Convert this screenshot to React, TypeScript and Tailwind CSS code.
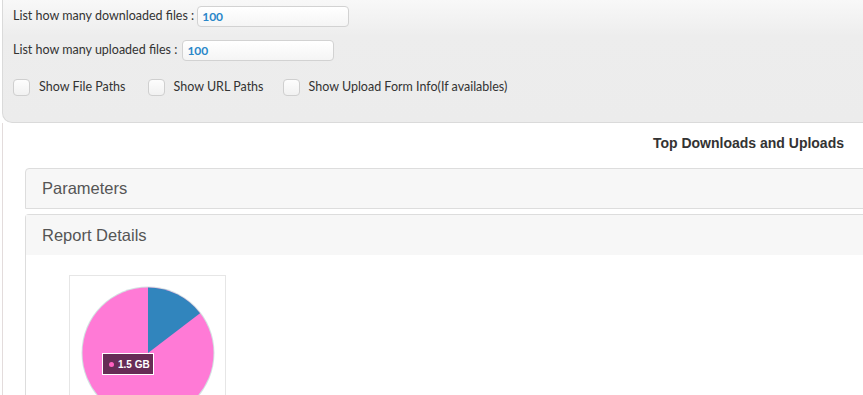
import React from "react";

function Check({ label }: { label: string }) {
  return (
    <div className="flex items-center">
      <div className="w-[17px] h-[17px] rounded-[4px] border border-[#cfcfcf] bg-gradient-to-b from-[#fdfdfd] to-[#f1f1f1]" />
      <span className="ml-[9px] text-[12.5px] text-[#333]">{label}</span>
    </div>
  );
}

function Pie() {
  const cx = 78, cy = 77, r = 65.5;
  const a = (52.6 * Math.PI) / 180;
  const ex = cx + r * Math.sin(a);
  const ey = cy - r * Math.cos(a);
  return (
    <svg width="156" height="150" viewBox="0 0 156 150">
      <circle cx={cx} cy={cy} r={r + 1} fill="#d3e2e2" />
      <circle cx={cx} cy={cy} r={r} fill="#ff7ad6" />
      <path d={`M${cx} ${cy} L${cx} ${cy - r} A${r} ${r} 0 0 1 ${ex} ${ey} Z`} fill="#3185bd" />
    </svg>
  );
}

export default function App() {
  return (
    <div className="w-[863px] h-[395px] overflow-hidden bg-white" style={{ fontFamily: "Lato, 'Open Sans', sans-serif" }}>
      <div className="ml-[2px] h-[123px] border-l border-b border-[#dadada] rounded-bl-[10px] bg-gradient-to-b from-[#f8f8f8] via-[#ededed] via-30% to-[#ececec] pl-[10px] pt-[6px]">
        <div className="flex items-center h-[21px]">
          <span className="text-[12.5px] text-[#333]">List how many downloaded files :</span>
          <div className="ml-[3px] w-[152px] h-[21px] rounded-[4px] border border-[#d2d2d2] bg-gradient-to-b from-[#ffffff] to-[#f5f5f5] pl-[4px] flex items-center">
            <span className="text-[12px] font-bold text-[#2a87c9]">100</span>
          </div>
        </div>
        <div className="flex items-center h-[21px] mt-[13px]">
          <span className="text-[12.5px] text-[#333]">List how many uploaded files :</span>
          <div className="ml-[5px] w-[152px] h-[21px] rounded-[4px] border border-[#d2d2d2] bg-gradient-to-b from-[#ffffff] to-[#f5f5f5] pl-[4px] flex items-center">
            <span className="text-[12px] font-bold text-[#2a87c9]">100</span>
          </div>
        </div>
        <div className="flex items-center mt-[17px]">
          <Check label="Show File Paths" />
          <div className="w-[22px]" />
          <Check label="Show URL Paths" />
          <div className="w-[19px]" />
          <Check label="Show Upload Form Info(If availables)" />
        </div>
      </div>
      <div className="ml-[2px] h-[280px] border-l border-[#e3dcdc] overflow-hidden" style={{ fontFamily: "'Liberation Sans', Arial, sans-serif" }}>
        <div className="flex justify-end pr-[19px] pt-[10px] h-[45px]">
          <span className="text-[14px] font-bold text-[#333]">Top Downloads and Uploads</span>
        </div>
        <div className="ml-[22px] mr-[-10px] h-[41px] border border-[#dddddd] rounded-tl-[4px] bg-[#f7f7f7] flex items-center pl-[16px]">
          <span className="text-[16.5px] text-[#555]">Parameters</span>
        </div>
        <div className="ml-[22px] mr-[-10px] mt-[5px] border-l border-t border-[#dddddd] rounded-tl-[4px] h-[300px]">
          <div className="h-[40px] bg-[#f7f7f7] flex items-center pl-[16px]">
            <span className="text-[16.5px] text-[#555]">Report Details</span>
          </div>
          <div className="pl-[43px] pt-[20px]">
            <div className="relative w-[157px] h-[150px] border border-[#e6e6e6] border-b-0">
              <div className="absolute left-0 top-0">
                <Pie />
              </div>
              <div className="absolute left-[32px] top-[77px] h-[22px] w-[52px] bg-[#672c56] border border-white flex items-center pl-[6px]">
                <span className="w-[5px] h-[5px] rounded-full bg-[#ff5fbf]" />
                <span className="ml-[4px] text-[10px] font-bold text-white">1.5 GB</span>
              </div>
            </div>
          </div>
        </div>
      </div>
    </div>
  );
}
